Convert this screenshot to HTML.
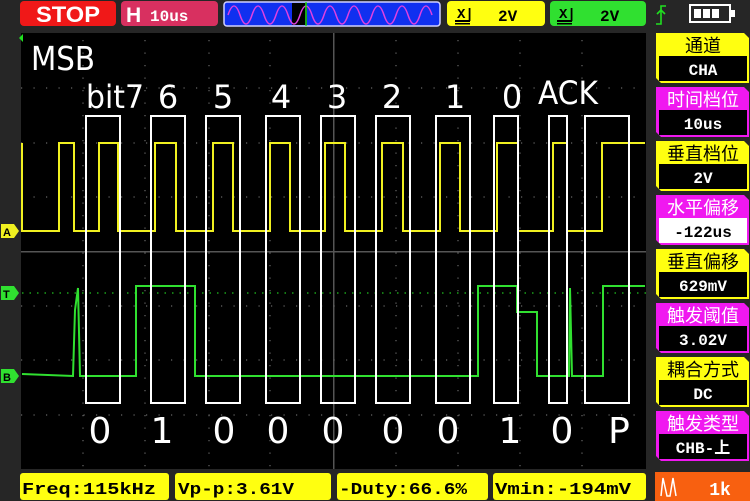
<!DOCTYPE html>
<html><head><meta charset="utf-8"><style>
html,body{margin:0;padding:0;background:#2a2a2a;width:750px;height:501px;overflow:hidden}
svg{display:block}
</style></head><body>
<svg width="750" height="501" viewBox="0 0 750 501" xmlns="http://www.w3.org/2000/svg">
<rect width="750" height="501" fill="#262626"/>
<!-- top bar -->
<rect x="20" y="1" width="96" height="25" rx="4" fill="#f01818"/>
<text x="68" y="22" font-family="Liberation Sans, sans-serif" font-weight="bold" font-size="22" fill="#fff" text-anchor="middle" textLength="64" lengthAdjust="spacingAndGlyphs">STOP</text>
<rect x="121" y="1" width="97" height="25" rx="4" fill="#d83060"/>
<text x="126" y="22" font-family="Liberation Sans, sans-serif" font-weight="bold" font-size="21" fill="#fff">H</text>
<text x="150" y="21" font-family="Liberation Mono, monospace" font-weight="bold" font-size="16" fill="#fff">10us</text>
<rect x="224" y="2" width="216" height="24" rx="3" fill="#1030f0" stroke="#d0d0ff" stroke-width="1.5"/>
<rect x="292" y="3" width="15" height="22" fill="#000"/>
<path d="M228,20 Q234,0 240,20 T252,20 T264,20 T276,20 T288,20 T300,20 T312,20 T324,20 T336,20 T348,20 T360,20 T372,20 T384,20 T396,20 T408,20 T420,20 T432,20" fill="none" stroke="#e040e0" stroke-width="1.5" transform="translate(0,-3) scale(1,0.9)"/>
<line x1="306" y1="2" x2="306" y2="26" stroke="#20e020" stroke-width="1.5"/>
<rect x="447" y="1" width="98" height="25" rx="4" fill="#ffff10"/>
<text x="457" y="18" font-family="Liberation Mono, monospace" font-weight="bold" font-size="14" fill="#000">X|</text>
<rect x="455" y="20" width="15" height="2" fill="#000"/><rect x="455" y="23" width="15" height="1.5" fill="#000"/>
<text x="498" y="21" font-family="Liberation Mono, monospace" font-weight="bold" font-size="16" fill="#000">2V</text>
<rect x="550" y="1" width="96" height="25" rx="4" fill="#30e030"/>
<text x="559" y="18" font-family="Liberation Mono, monospace" font-weight="bold" font-size="14" fill="#000">X|</text>
<rect x="557" y="20" width="15" height="2" fill="#000"/><rect x="557" y="23" width="15" height="1.5" fill="#000"/>
<text x="600" y="21" font-family="Liberation Mono, monospace" font-weight="bold" font-size="16" fill="#000">2V</text>
<path d="M656,24 L661,24 L661,6 L666,6 M657,14 L661,10 L665,14" fill="none" stroke="#20e020" stroke-width="1.6"/>
<rect x="690" y="5" width="40" height="17" fill="none" stroke="#fff" stroke-width="2"/>
<rect x="731" y="10" width="4" height="7" fill="#fff"/>
<rect x="694" y="9" width="7" height="9" fill="#fff"/><rect x="703" y="9" width="7" height="9" fill="#fff"/><rect x="712" y="9" width="7" height="9" fill="#fff"/>
<!-- screen -->
<rect x="21" y="33" width="625" height="436" fill="#000"/>
<polygon points="19,38 23,34 23,42" fill="#20e020"/>
<g fill="#555">
<rect x="333" y="33" width="1.5" height="436"/>
<rect x="21" y="251" width="625" height="1.5"/>
</g>
<g stroke="#666" stroke-width="1.2" stroke-dasharray="1.2 11.3">
<line x1="83" y1="40" x2="83" y2="469"/><line x1="145" y1="40" x2="145" y2="469"/><line x1="209" y1="40" x2="209" y2="469"/><line x1="270" y1="40" x2="270" y2="469"/><line x1="396" y1="40" x2="396" y2="469"/><line x1="458" y1="40" x2="458" y2="469"/><line x1="520" y1="40" x2="520" y2="469"/><line x1="582" y1="40" x2="582" y2="469"/>
<line x1="21" y1="88" x2="646" y2="88"/><line x1="21" y1="143" x2="646" y2="143"/><line x1="21" y1="197" x2="646" y2="197"/><line x1="21" y1="306" x2="646" y2="306"/><line x1="21" y1="360" x2="646" y2="360"/><line x1="21" y1="415" x2="646" y2="415"/>
</g>
<line x1="22" y1="293" x2="646" y2="293" stroke="#20c020" stroke-width="1.2" stroke-dasharray="1.5 6"/>
<!-- waveforms -->
<path d="M22,143 L22,231 L59,231 L59,143 L74,143 L74,231 L99,231 L99,143 L118,143 L118,231 L155,231 L155,143 L176,143 L176,231 L213,231 L213,143 L233,143 L233,231 L270,231 L270,143 L290,143 L290,231 L325,231 L325,143 L345,143 L345,231 L382,231 L382,143 L403,143 L403,231 L440,231 L440,143 L460,143 L460,231 L497,231 L497,143 L518,143 L518,231 L553,231 L553,143 L567,143 L567,231 L602,231 L602,143 L645,143" fill="none" stroke="#f0f020" stroke-width="2"/>
<path d="M22,374 L73,376 L75,310 L78,288 L80,376 L136,376 L136,286 L195,286 L195,376 L478,376 L478,286 L517,286 L517,312 L537,312 L537,376 L569,376 L570,288 L572,376 L603,376 L603,286 L645,286" fill="none" stroke="#30e030" stroke-width="2"/>
<!-- markers -->
<polygon points="1,224 14,224 19,231 14,238 1,238" fill="#f0f020"/>
<text x="3" y="236" font-family="Liberation Sans, sans-serif" font-weight="bold" font-size="11" fill="#000">A</text>
<polygon points="1,286 14,286 19,293 14,300 1,300" fill="#30e030"/>
<text x="3" y="298" font-family="Liberation Sans, sans-serif" font-weight="bold" font-size="11" fill="#000">T</text>
<polygon points="1,369 14,369 19,376 14,383 1,383" fill="#30e030"/>
<text x="3" y="381" font-family="Liberation Sans, sans-serif" font-weight="bold" font-size="11" fill="#000">B</text>
<!-- boxes -->
<g fill="none" stroke="#fff" stroke-width="2">
<rect x="86" y="116" width="34" height="287"/><rect x="151" y="116" width="34" height="287"/><rect x="206" y="116" width="34" height="287"/><rect x="266" y="116" width="34" height="287"/><rect x="321" y="116" width="34" height="287"/><rect x="376" y="116" width="34" height="287"/><rect x="436" y="116" width="34" height="287"/><rect x="494" y="116" width="24" height="287"/><rect x="549" y="116" width="18" height="287"/><rect x="585" y="116" width="44" height="287"/>
</g>
<g font-family="DejaVu Sans, Liberation Sans, sans-serif" fill="#fff" text-anchor="middle" font-size="32">
<text x="63" y="70" font-size="33" textLength="64" lengthAdjust="spacingAndGlyphs">MSB</text>
<text x="115" y="108" textLength="58" lengthAdjust="spacingAndGlyphs">bit7</text><text x="168" y="108">6</text><text x="223" y="108">5</text><text x="281" y="108">4</text><text x="337" y="108">3</text><text x="392" y="108">2</text><text x="455" y="108">1</text><text x="512" y="108">0</text><text x="568" y="104" textLength="60" lengthAdjust="spacingAndGlyphs">ACK</text>
<text x="100" y="443" font-size="36">0</text><text x="162" y="443" font-size="36">1</text><text x="224" y="443" font-size="36">0</text><text x="278" y="443" font-size="36">0</text><text x="333" y="443" font-size="36">0</text><text x="393" y="443" font-size="36">0</text><text x="448" y="443" font-size="36">0</text><text x="510" y="443" font-size="36">1</text><text x="562" y="443" font-size="36">0</text><text x="619" y="443" font-size="36">P</text>
</g>
<!-- right panel -->
<g font-family="Liberation Mono, 'Noto Sans CJK SC', monospace" font-weight="bold" text-anchor="middle">
<g transform="translate(0,0)">
<path d="M656,33 L744,33 L749,38 L749,83 L661,83 L656,78 Z" fill="#ffff10"/><rect x="659" y="56" width="88" height="25" fill="#000"/><text x="703" y="52" font-size="18" fill="#000" font-family="Noto Sans CJK SC, sans-serif" font-weight="normal">通道</text><text x="703" y="75" font-size="16" fill="#fff">CHA</text></g>
<g transform="translate(0,54)">
<path d="M656,33 L744,33 L749,38 L749,83 L661,83 L656,78 Z" fill="#f018f0"/><rect x="659" y="56" width="88" height="25" fill="#000"/><text x="703" y="52" font-size="18" fill="#fff" font-family="Noto Sans CJK SC, sans-serif" font-weight="normal">时间档位</text><text x="703" y="75" font-size="16" fill="#fff">10us</text></g>
<g transform="translate(0,108)">
<path d="M656,33 L744,33 L749,38 L749,83 L661,83 L656,78 Z" fill="#ffff10"/><rect x="659" y="56" width="88" height="25" fill="#000"/><text x="703" y="52" font-size="18" fill="#000" font-family="Noto Sans CJK SC, sans-serif" font-weight="normal">垂直档位</text><text x="703" y="75" font-size="16" fill="#fff">2V</text></g>
<g transform="translate(0,162)">
<path d="M656,33 L744,33 L749,38 L749,83 L661,83 L656,78 Z" fill="#f018f0"/><rect x="659" y="56" width="88" height="25" fill="#fff"/><text x="703" y="52" font-size="18" fill="#fff" font-family="Noto Sans CJK SC, sans-serif" font-weight="normal">水平偏移</text><text x="703" y="75" font-size="16" fill="#000">-122us</text></g>
<g transform="translate(0,216)">
<path d="M656,33 L744,33 L749,38 L749,83 L661,83 L656,78 Z" fill="#ffff10"/><rect x="659" y="56" width="88" height="25" fill="#000"/><text x="703" y="52" font-size="18" fill="#000" font-family="Noto Sans CJK SC, sans-serif" font-weight="normal">垂直偏移</text><text x="703" y="75" font-size="16" fill="#fff">629mV</text></g>
<g transform="translate(0,270)">
<path d="M656,33 L744,33 L749,38 L749,83 L661,83 L656,78 Z" fill="#f018f0"/><rect x="659" y="56" width="88" height="25" fill="#000"/><text x="703" y="52" font-size="18" fill="#fff" font-family="Noto Sans CJK SC, sans-serif" font-weight="normal">触发阈值</text><text x="703" y="75" font-size="16" fill="#fff">3.02V</text></g>
<g transform="translate(0,324)">
<path d="M656,33 L744,33 L749,38 L749,83 L661,83 L656,78 Z" fill="#ffff10"/><rect x="659" y="56" width="88" height="25" fill="#000"/><text x="703" y="52" font-size="18" fill="#000" font-family="Noto Sans CJK SC, sans-serif" font-weight="normal">耦合方式</text><text x="703" y="75" font-size="16" fill="#fff">DC</text></g>
<g transform="translate(0,378)">
<path d="M656,33 L744,33 L749,38 L749,83 L661,83 L656,78 Z" fill="#f018f0"/><rect x="659" y="56" width="88" height="25" fill="#000"/><text x="703" y="52" font-size="18" fill="#fff" font-family="Noto Sans CJK SC, sans-serif" font-weight="normal">触发类型</text><text x="703" y="75" font-size="16" fill="#fff" font-family="Liberation Mono, Noto Sans CJK SC, monospace">CHB-上</text></g>
</g>
<rect x="655" y="472" width="95" height="29" fill="#f86010"/>
<path d="M661,496 L663,478 L667,496 L670,496 L673,478 L676,496" fill="none" stroke="#fff" stroke-width="1.5"/>
<text x="720" y="495" font-family="Liberation Mono, monospace" font-weight="bold" font-size="18" fill="#fff" text-anchor="middle">1k</text>
<!-- bottom bar -->
<g font-family="Liberation Mono, monospace" font-weight="bold" font-size="17" fill="#000">
<rect x="20" y="473" width="149" height="27" rx="3" fill="#ffff10"/><text x="22" y="494" textLength="134" lengthAdjust="spacingAndGlyphs">Freq:115kHz</text>
<rect x="175" y="473" width="156" height="27" rx="3" fill="#ffff10"/><text x="178" y="494" textLength="116" lengthAdjust="spacingAndGlyphs">Vp-p:3.61V</text>
<rect x="337" y="473" width="151" height="27" rx="3" fill="#ffff10"/><text x="339" y="494" textLength="128" lengthAdjust="spacingAndGlyphs">-Duty:66.6%</text>
<rect x="493" y="473" width="153" height="27" rx="3" fill="#ffff10"/><text x="495" y="494" textLength="136" lengthAdjust="spacingAndGlyphs">Vmin:-194mV</text>
</g>
</svg>
</body></html>
